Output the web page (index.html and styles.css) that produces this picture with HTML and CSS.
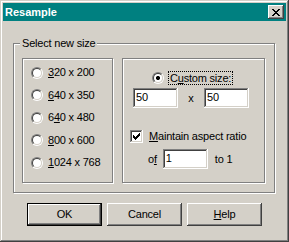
FILE: index.html
```html
<!DOCTYPE html>
<html lang="en">
<head>
    <meta charset="UTF-8">
    <title>Resample</title>
    <link rel="stylesheet" href="styles.css">
</head>
<body>
    <div class="window">
        <div class="titlebar">
            <span class="title">Resample</span>
            <span class="close-btn">
                <svg width="8" height="7" viewBox="0 0 8 7" shape-rendering="crispEdges">
                    <path d="M0 0h2v1h-2zM6 0h2v1h-2zM1 1h2v1h-2zM5 1h2v1h-2zM2 2h4v1h-4zM3 3h2v1h-2zM2 4h4v1h-4zM1 5h2v1h-2zM5 5h2v1h-2zM0 6h2v1h-2zM6 6h2v1h-2z" fill="#000"/>
                </svg>
            </span>
        </div>

        <div class="content">
            <div class="group">
                <span class="group-label">Select new size</span>
                <div class="panels">
                    <div class="panel presets">
                        <div class="option"><span class="radio"></span><span><u>3</u>20 x 200</span></div>
                        <div class="option"><span class="radio"></span><span><u>6</u>40 x 350</span></div>
                        <div class="option"><span class="radio"></span><span>6<u>4</u>0 x 480</span></div>
                        <div class="option"><span class="radio"></span><span><u>8</u>00 x 600</span></div>
                        <div class="option"><span class="radio"></span><span><u>1</u>024 x 768</span></div>
                    </div>

                    <div class="panel custom">
                        <div class="custom-row">
                            <span class="radio checked"></span>
                            <span class="focus">C<u>u</u>stom size:</span>
                        </div>
                        <div class="size-row">
                            <span class="field">50</span>
                            <span class="times">x</span>
                            <span class="field">50</span>
                        </div>
                        <div class="check-row">
                            <span class="checkbox">
                                <svg width="7" height="7" viewBox="0 0 7 7" shape-rendering="crispEdges">
                                    <path d="M0 2h1v3h-1zM1 3h1v3h-1zM2 4h1v3h-1zM3 3h1v3h-1zM4 2h1v3h-1zM5 1h1v3h-1zM6 0h1v3h-1z" fill="#000"/>
                                </svg>
                            </span>
                            <span><u>M</u>aintain aspect ratio</span>
                        </div>
                        <div class="ratio-row">
                            <span>o<u>f</u></span>
                            <span class="field">1</span>
                            <span>to 1</span>
                        </div>
                    </div>
                </div>
            </div>

            <div class="buttons">
                <span class="btn default">OK</span>
                <span class="btn">Cancel</span>
                <span class="btn"><u>H</u>elp</span>
            </div>
        </div>
    </div>
</body>
</html>
```

FILE: styles.css
```css
body {
    margin: 0;
    background-color: #d4d0c8;
    font-family: 'Liberation Sans', Arial, sans-serif;
    font-size: 11px;
    line-height: 13px;
    letter-spacing: -0.2px;
    color: #000;
}

u {
    text-decoration-thickness: 1px;
}

.window {
    width: 289px;
    height: 242px;
    box-sizing: border-box;
    padding: 3px;
    background-color: #d4d0c8;
    box-shadow: inset -1px -1px #404040, inset 1px 1px #d4d0c8,
                inset -2px -2px #808080, inset 2px 2px #fff;
}

.titlebar {
    height: 18px;
    background-color: #008080;
    display: flex;
    align-items: center;
    justify-content: space-between;
    padding: 0 2px;
}

.title {
    color: #fff;
    font-weight: bold;
    letter-spacing: 0;
}

.close-btn {
    width: 16px;
    height: 14px;
    display: flex;
    align-items: center;
    justify-content: center;
    background-color: #d4d0c8;
    box-shadow: inset -1px -1px #404040, inset 1px 1px #fff,
                inset -2px -2px #808080, inset 2px 2px #d4d0c8;
}

.content {
    padding: 22px 0 0 10px;
}

/* etched group box */
.group {
    width: 262px;
    box-sizing: border-box;
    border: 1px solid #808080;
    box-shadow: inset 1px 1px #fff, 1px 1px #fff;
    padding: 0 9px 9px 8px;
}

.group-label {
    display: block;
    width: fit-content;
    margin: -7px 0 0 -2px;
    padding: 0 2px;
    background-color: #d4d0c8;
}

.panels {
    display: flex;
    gap: 9px;
    margin-top: 8px;
}

.panel {
    height: 125px;
    box-sizing: border-box;
    border: 1px solid #808080;
    box-shadow: inset 1px 1px #fff, 1px 1px #fff;
}

.presets {
    width: 91px;
    display: flex;
    flex-direction: column;
    gap: 9.5px;
    padding: 7px 0 0 8px;
}

.custom {
    width: 143px;
}

.option {
    display: flex;
    align-items: center;
    gap: 5px;
    height: 13px;
}

.radio {
    width: 12px;
    height: 12px;
    box-sizing: border-box;
    border-radius: 50%;
    border: 1px solid;
    border-color: #808080 #fff #fff #808080;
    flex-shrink: 0;
}

.radio::before {
    content: "";
    display: block;
    width: 10px;
    height: 10px;
    box-sizing: border-box;
    border-radius: 50%;
    border: 1px solid;
    border-color: #404040 #d4d0c8 #d4d0c8 #404040;
    background-color: #fff;
}

.radio.checked::before {
    background: radial-gradient(circle, #000 1.8px, #fff 2.3px);
}

.custom-row {
    display: flex;
    align-items: center;
    gap: 4px;
    margin-top: 12px;
    padding-left: 29px;
}

.focus {
    border: 1px dotted #000;
    padding: 0 1px;
    line-height: 12px;
}

.size-row {
    display: flex;
    align-items: center;
    margin-top: 3px;
    padding-left: 10px;
}

.times {
    width: 26px;
    text-align: center;
}

.field {
    width: 45px;
    height: 20px;
    box-sizing: border-box;
    padding: 3px 3px 0;
    background-color: #fff;
    box-shadow: inset -1px -1px #fff, inset 1px 1px #808080,
                inset -2px -2px #d4d0c8, inset 2px 2px #404040;
}

.check-row {
    display: flex;
    align-items: center;
    gap: 6px;
    margin-top: 22px;
    padding-left: 7px;
}

.checkbox {
    width: 13px;
    height: 13px;
    display: flex;
    align-items: center;
    justify-content: center;
    background-color: #fff;
    box-shadow: inset -1px -1px #fff, inset 1px 1px #808080,
                inset -2px -2px #d4d0c8, inset 2px 2px #404040;
}

.ratio-row {
    display: flex;
    align-items: center;
    gap: 6px;
    margin-top: 6px;
    padding-left: 25px;
}

.ratio-row .field {
    margin-right: 1px;
}

.buttons {
    display: flex;
    gap: 5px;
    margin-top: 10px;
    padding-left: 14px;
}

.btn {
    width: 75px;
    height: 23px;
    box-sizing: border-box;
    display: flex;
    align-items: center;
    justify-content: center;
    box-shadow: inset -1px -1px #404040, inset 1px 1px #fff,
                inset -2px -2px #808080, inset 2px 2px #d4d0c8;
}

.btn.default {
    box-shadow: inset 0 0 0 1px #000,
                inset -2px -2px #404040, inset 2px 2px #fff,
                inset -3px -3px #808080, inset 3px 3px #d4d0c8;
}
```
